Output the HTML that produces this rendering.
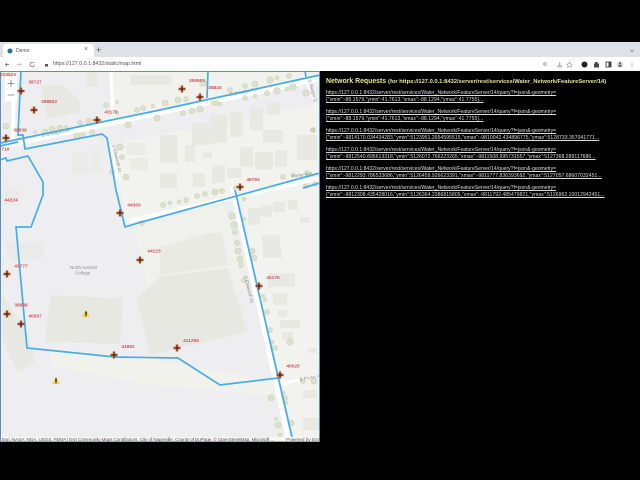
<!DOCTYPE html>
<html><head><meta charset="utf-8"><title>Demo</title>
<style>
html,body{margin:0;padding:0;background:#000;width:640px;height:480px;overflow:hidden}
body{font-family:"Liberation Sans",sans-serif;position:relative}
#wrap{position:absolute;left:0;top:0;width:640px;height:480px;background:#000;filter:blur(.38px);overflow:hidden}
.a{position:absolute}
#panel{left:326px;top:72px;width:310px;color:#eee}
#panel h1{margin:4.500px 0 0;font-size:6.900px;line-height:9px;font-weight:bold;color:#e6e698;white-space:nowrap}
#panel h1 span{font-size:5.750px}
#panel p{margin:0;position:absolute;left:0;font-size:5.050px;line-height:7px;white-space:nowrap;color:#dcdcdc;text-decoration:underline}
#panel p span{letter-spacing:.06px}
svg text{font-family:"Liberation Sans",sans-serif}
</style></head><body><div id="wrap">
<div class="a" style="left:0;top:42px;width:640px;height:15px;background:#dee1e6"></div>
<div class="a" style="left:3px;top:44px;width:91px;height:13px;background:#fff;border-radius:4px 4px 0 0"></div>
<div class="a" style="left:0;top:57px;width:640px;height:14px;background:#fff"></div>
<div class="a" style="left:16px;top:47.500px;font-size:5px;color:#555">Demo</div>
<div class="a" style="left:84px;top:46px;font-size:7px;color:#666">×</div>
<div class="a" style="left:96px;top:45px;font-size:9px;color:#555">+</div>
<div class="a" style="left:53px;top:60.500px;font-size:5.300px;color:#555;white-space:nowrap">https://127.0.0.1:8432/static/map.html</div>
<svg class="a" style="left:0;top:42px" width="640" height="30" viewBox="0 42 640 30">
<circle cx="10" cy="51" r="2.500" fill="#2f6f8f"/>
<path d="M9 64.500H5.500M7 63 5.500 64.500 7 66" stroke="#666" fill="none" stroke-width=".7"/>
<path d="M17 64.500H21M19.500 63 21 64.500 19.500 66" stroke="#bbb" fill="none" stroke-width=".7"/>
<path d="M34 63a2.300 2.300 0 1 0 .5 2" stroke="#666" fill="none" stroke-width=".7"/>
<rect x="45" y="64" width="3" height="2.500" fill="#555"/>
<circle cx="545" cy="64" r="1.300" fill="none" stroke="#777" stroke-width=".6"/>
<path d="M558 65.500h3.500v1.500h-3.500zM559.800 62v3.500" fill="none" stroke="#777" stroke-width=".6"/>
<path d="M569.500 62l.9 1.900 2 .2-1.500 1.300.4 2-1.800-1-1.800 1 .4-2-1.500-1.300 2-.2z" fill="none" stroke="#777" stroke-width=".5"/>
<circle cx="584.500" cy="64.500" r="3" fill="#222"/>
<path d="M595 62h2.500v1.500h1.500v4h-5v-4h1z" fill="#444"/>
<rect x="606" y="62" width="5" height="5" fill="none" stroke="#444" stroke-width=".9"/>
<rect x="608.500" y="62" width="2.500" height="5" fill="#444"/>
<circle cx="620" cy="64.500" r="3.500" fill="#ddd"/><circle cx="620" cy="63.500" r="1.100" fill="#555"/><path d="M618 66.500a2 1.500 0 0 1 4 0z" fill="#555"/>
<path d="M632 62.500v.8M632 64.200v.8M632 66v.8" stroke="#555" stroke-width=".8"/>
<path d="M630.500 50l1.500 1.500 1.500-1.500" fill="none" stroke="#666" stroke-width=".7"/>
</svg>

<svg class="a" style="left:0;top:71px" width="320" height="371" viewBox="0 71 320 371">
<rect x="0" y="71" width="320" height="371" fill="#eeeef1"/>
<!-- ground -->
<path d="M107 145 320 104V175L127 222Z" fill="#f2f2ef"/>
<path d="M240 190 320 176V442H295L263 310Z" fill="#f2f2ef"/>
<path d="M112 71H320V76L112 118Z" fill="#f1f1ee"/>
<path d="M134 225 225 204 245 290 150 300Z" fill="#f0f0ed"/>
<path d="M50 350 150 358 280 384 285 395 150 385 50 365Z" fill="#f2f2ed"/>
<!-- large buildings -->
<g fill="#e8e8e2">
<path d="M42 85H62L80 100V113L46 118Z"/>
<path d="M87 72H97V87H87Z"/>
<path d="M130 75H172V85H130Z"/>
<path d="M50 295 123 298 120 344 45 342Z"/>
<path d="M137 298 160 277 228 268 247 332 150 355Z"/>
<path d="M160 247 210 233 222 233 228 265 160 275Z" opacity=".75"/>
<path d="M2 293 28 335 35 363 17 372 2 340Z" opacity=".9"/>
<path d="M3 242 43 242 45 258 12 262Z" opacity=".6"/>
<path d="M0 190H20V206H0Z" opacity=".5"/>
</g>
<!-- houses -->
<g fill="#e9e9e4">
<path d="M160 135H178V163H160Z"/><path d="M192 123H212V145H192Z"/><path d="M210 115H227V143H210Z"/><path d="M230 112H243V137H230Z"/><path d="M250 107H263V130H250Z"/><path d="M267 102H280V115H267Z"/><path d="M263 130H283V143H263Z"/><path d="M297 135H317V160H297Z"/><path d="M240 147H253V167H240Z"/><path d="M255 152H273V170H255Z"/><path d="M275 150H287V167H275Z"/><path d="M185 145H195V162H185Z"/><path d="M203 152H212V158H203Z"/><path d="M193 173H205V187H193Z"/><path d="M212 165H225V183H212Z"/><path d="M227 168H242V178H227Z"/><path d="M160 173H177V188H160Z"/>
<path d="M248 208H260V225H248Z"/><path d="M260 205H272V217H260Z"/><path d="M273 202H285V212H273Z"/><path d="M288 200H298V210H288Z"/><path d="M300 217H310V223H300Z"/><path d="M262 235H280V247H262Z"/><path d="M263 247H282V258H263Z"/><path d="M268 273H295V287H268Z"/><path d="M273 293H287V305H273Z"/><path d="M278 310H287V317H278Z"/><path d="M280 320H300V328H280Z"/><path d="M282 332H293V340H282Z"/><path d="M308 348H317V353H308Z"/><path d="M303 390H317V398H303Z"/><path d="M303 418H320V430H303Z"/>
<path d="M72 152H88V175H72Z" opacity=".7"/><path d="M90 150H102V172H90Z" opacity=".7"/><path d="M127 143H145V155H127Z" opacity=".7"/><path d="M130 158H148V170H130Z" opacity=".7"/>
</g>
<!-- roads -->
<g fill="none" stroke="#fff">
<path d="M0 147 320 79" stroke-width="4.500"/>
<path d="M112 145 117 178" stroke-width="2.500"/>
<path d="M130 221 320 178" stroke-width="4.500"/>
<path d="M232 186 289 442" stroke-width="4.500"/>
<path d="M14 71 13 140" stroke-width="4"/>
<path d="M111 71 113 122" stroke-width="3"/>
<path d="M280 384 320 376" stroke-width="3"/>
<path d="M304 75 316 104" stroke-width="2.500"/>
</g>
<!-- trees -->
<g fill="#dbe1cb" stroke="#ccd4b8" stroke-width=".6">
<circle cx="6" cy="126" r="3"/><circle cx="35" cy="132" r="1.500"/><circle cx="45" cy="132" r="3"/><circle cx="52" cy="129" r="3"/><circle cx="60" cy="128" r="3"/><circle cx="66" cy="127" r="1.500"/>
<circle cx="80" cy="123" r="2.500"/><circle cx="89" cy="121" r="3"/><circle cx="92" cy="132" r="2.500"/><circle cx="77" cy="136" r="3"/><circle cx="83" cy="135" r="2.500"/><circle cx="106" cy="105" r="2.500"/>
<circle cx="117" cy="113" r="1.500"/><circle cx="117" cy="102" r="1.500"/><circle cx="137" cy="110" r="2.500"/><circle cx="143" cy="108" r="2.500"/><circle cx="153" cy="106" r="1.800"/>
<circle cx="128" cy="125" r="3.300"/><circle cx="157" cy="118" r="3"/><circle cx="120" cy="147" r="3.300"/><circle cx="126" cy="177" r="3"/><circle cx="122" cy="157" r="2.500"/><circle cx="112" cy="172" r="2.500"/>
<circle cx="165" cy="103" r="3"/><circle cx="178" cy="100" r="3"/><circle cx="186" cy="99" r="2.500"/><circle cx="203" cy="83" r="3.300"/>
<circle cx="183" cy="113" r="2.500"/><circle cx="192" cy="111" r="3"/><circle cx="200" cy="109" r="3.300"/><circle cx="216" cy="103" r="2.500"/>
<circle cx="230" cy="90" r="2.500"/><circle cx="245" cy="86" r="2.500"/><circle cx="255" cy="84" r="3"/><circle cx="270" cy="80" r="3.300"/><circle cx="277" cy="78" r="2"/><circle cx="289" cy="76" r="2.500"/>
<circle cx="245" cy="98" r="2.500"/><circle cx="255" cy="96" r="1.800"/><circle cx="267" cy="93" r="2.500"/><circle cx="277" cy="91" r="3.300"/><circle cx="287" cy="89" r="2"/><circle cx="293" cy="87" r="3.300"/><circle cx="306" cy="93" r="3.300"/>
<circle cx="220" cy="104" r="1.800"/><circle cx="213" cy="103" r="2"/><circle cx="313" cy="130" r="2.500" fill="#cfcfc0"/>
<circle cx="283" cy="177" r="2.500"/><circle cx="293" cy="175" r="2"/><circle cx="307" cy="173" r="2.500"/><circle cx="306" cy="186" r="2.500"/><circle cx="315" cy="184" r="2.500"/>
<circle cx="197" cy="196" r="2.500"/><circle cx="205" cy="194" r="2.500"/><circle cx="215" cy="192" r="3"/><circle cx="222" cy="191" r="2.500"/><circle cx="235" cy="188" r="2"/>
<circle cx="163" cy="205" r="2.500"/><circle cx="170" cy="203" r="2"/><circle cx="179" cy="202" r="2"/><circle cx="186" cy="200" r="2.500"/><circle cx="142" cy="223" r="2.500"/>
<circle cx="232" cy="216" r="3.300"/><circle cx="234" cy="225" r="3.300"/><circle cx="244" cy="219" r="2"/><circle cx="244" cy="199" r="2"/><circle cx="235" cy="232" r="2.500"/><circle cx="237" cy="243" r="2.500"/><circle cx="238" cy="251" r="3"/><circle cx="240" cy="259" r="3"/><circle cx="241" cy="265" r="2.500"/><circle cx="252" cy="251" r="3"/><circle cx="254" cy="258" r="3"/><circle cx="244" cy="280" r="2.500"/>
<circle cx="263" cy="296" r="1.800"/><circle cx="265" cy="300" r="1.800"/><circle cx="267" cy="312" r="2.500"/><circle cx="270" cy="330" r="2.500"/><circle cx="272" cy="342" r="2"/><circle cx="290" cy="342" r="3.300"/><circle cx="275" cy="348" r="2.500"/><circle cx="303" cy="381" r="2.500"/><circle cx="314" cy="381" r="3"/>
<circle cx="271" cy="398" r="3"/><circle cx="283" cy="393" r="2"/><circle cx="285" cy="398" r="2.500"/><circle cx="286" cy="403" r="2"/><circle cx="291" cy="423" r="3"/><circle cx="278" cy="425" r="3"/><circle cx="276" cy="419" r="1.500"/><circle cx="280" cy="435" r="2"/>
</g>
<!-- map labels -->
<g font-size="4.500" fill="#8a8a85">
<text x="42" y="137" transform="rotate(-12 42 137)">E Chicago Ave</text>
<text x="230" y="96" transform="rotate(-12 230 96)">E Chicago Ave</text>
<text x="308" y="80" transform="rotate(75 308 80)">S Sleight St</text>
<text x="112" y="145" transform="rotate(76 112 145)">S Ellsworth St</text>
<text x="244" y="276" transform="rotate(76 244 276)">S Ellsworth St</text>
<text x="292" y="178" transform="rotate(-10 292 178)">Porter Ave</text>
<text x="300" y="381" transform="rotate(-10 300 381)">E Porter Ave</text>
<text x="70" y="269">North Central</text><text x="75" y="274.500">College</text>
</g>
<!-- blue lines -->
<g fill="none" stroke="#45aee6" stroke-width="1.700" stroke-linejoin="miter">
<path d="M21 71 18 135H23L25 149 102 134 107 138 116 190 125 227 138 223 320 173"/>
<path d="M0 143 160 110 320 75"/>
<path d="M0 146 18 142"/>
<path d="M208 71 207 98"/>
<path d="M305 71 306 77"/>
<path d="M303 188 320 183"/>
<path d="M0 160 6 158 7 161 28 156 43 182 43 195 31 227 16 227 27 348 115 357 178 358 220 385 278 378"/>
<path d="M235 190 292 437"/>
</g>
<rect x=".5" y="71.500" width="319" height="370" fill="none" stroke="#5b8fc4" stroke-width="1"/>
<!-- feature labels -->
<g font-size="4.800" fill="#cf5458" font-weight="bold" text-anchor="middle">
<text x="8" y="76">410525</text><text x="35" y="83.500">38727</text><text x="49" y="103">398652</text><text x="111" y="113.500">43178</text><text x="20" y="131.500">38839</text><text x="4" y="150.500">0719</text>
<text x="197" y="82">396903</text><text x="215" y="89">38815</text><text x="253" y="181">46794</text>
<text x="11" y="201.500">44224</text><text x="134" y="206.500">44303</text><text x="154" y="252.500">44223</text><text x="21" y="267.500">43777</text><text x="21" y="306.500">38838</text><text x="35" y="317.500">40597</text>
<text x="128" y="348">41862</text><text x="191" y="342">411255</text><text x="273" y="279">45176</text><text x="293" y="367.500">40025</text>
</g>
<defs><g id="c"><path d="M-1.200-3.500H1.200V-1.200H3.500V1.200H1.200V3.500H-1.200V1.200H-3.500V-1.200H-1.200Z" fill="#a04d25"/><circle r="1" fill="#33251c"/></g>
<g id="w"><path d="M0-4.200 4.200 2.800H-4.200Z" fill="#f5d24a"/><path d="M0-2.500V.8" stroke="#222" stroke-width="1.400"/><circle cy="1.900" r=".7" fill="#222"/></g></defs>
<use href="#c" x="21" y="91"/><use href="#c" x="34" y="110"/><use href="#c" x="97" y="120"/><use href="#c" x="6" y="138"/><use href="#c" x="182" y="89"/><use href="#c" x="200" y="97"/><use href="#c" x="120" y="213"/><use href="#c" x="240" y="187"/><use href="#c" x="7" y="274"/><use href="#c" x="140" y="260"/><use href="#c" x="259" y="286"/><use href="#c" x="7" y="314"/><use href="#c" x="21" y="324"/><use href="#c" x="114" y="355"/><use href="#c" x="177" y="348"/><use href="#c" x="280" y="375"/>
<use href="#w" x="86" y="314"/><use href="#w" x="56" y="381"/>
<!-- zoom control -->
<rect x="5" y="77" width="12" height="24" fill="#fff"/>
<path d="M7.500 83.500h7M11 80v7M7.500 95h7" stroke="#777" stroke-width=".8"/>
<path d="M6 89h10" stroke="#e5e5e5" stroke-width=".5"/>
<!-- attribution -->
<rect x="1" y="437" width="318" height="4.500" fill="#fff" opacity=".55"/>
<text x="2" y="441" font-size="4.700" fill="#555" textLength="272">Esri, NASA, NGA, USGS, FEMA | Esri Community Maps Contributors, City of Naperville, County of DuPage, © OpenStreetMap, Microsoft ...</text>
<text x="286" y="441" font-size="4.700" fill="#555">Powered by Esri</text>
</svg>

<div id="panel" class="a">
<h1>Network Requests <span>(for https://127.0.0.1:8432/server/rest/services/Water_Network/FeatureServer/14)</span></h1>
<p style="top:18px">https://127.0.0.1:8432/server/rest/services/Water_Network/FeatureServer/14/query?f=json&amp;-geometry=<br><span>{"xmin":-88.1579,"ymin":41.7613,"xmax":-88.1294,"ymax":41.7755}...</span></p>
<p style="top:37px">https://127.0.0.1:8432/server/rest/services/Water_Network/FeatureServer/14/query?f=json&amp;-geometry=<br><span>{"xmin":-88.1579,"ymin":41.7613,"xmax":-88.1294,"ymax":41.7755}...</span></p>
<p style="top:56px">https://127.0.0.1:8432/server/rest/services/Water_Network/FeatureServer/14/query?f=json&amp;-geometry=<br><span>{"xmin":-9814170.034434283,"ymin":5123951.2654595515,"xmax":-9810042.434896775,"ymax":5128733.357041771...</span></p>
<p style="top:75px">https://127.0.0.1:8432/server/rest/services/Water_Network/FeatureServer/14/query?f=json&amp;-geometry=<br><span>{"xmin":-9812540.895613318,"ymin":5126072.766223265,"xmax":-9811508.995731557,"ymax":5127368.289117686...</span></p>
<p style="top:94px">https://127.0.0.1:8432/server/rest/services/Water_Network/FeatureServer/14/query?f=json&amp;-geometry=<br><span>{"xmin":-9812293.786533686,"ymin":5126459.926623391,"xmax":-9811777.836393692,"ymax":5127057.68607032451...</span></p>
<p style="top:113px">https://127.0.0.1:8432/server/rest/services/Water_Network/FeatureServer/14/query?f=json&amp;-geometry=<br><span>{"xmin":-9812308.435428016,"ymin":5126364.3386815805,"xmax":-9811792.485479821,"ymax":5126962.10012942451...</span></p>
</div>
</div></body></html>
